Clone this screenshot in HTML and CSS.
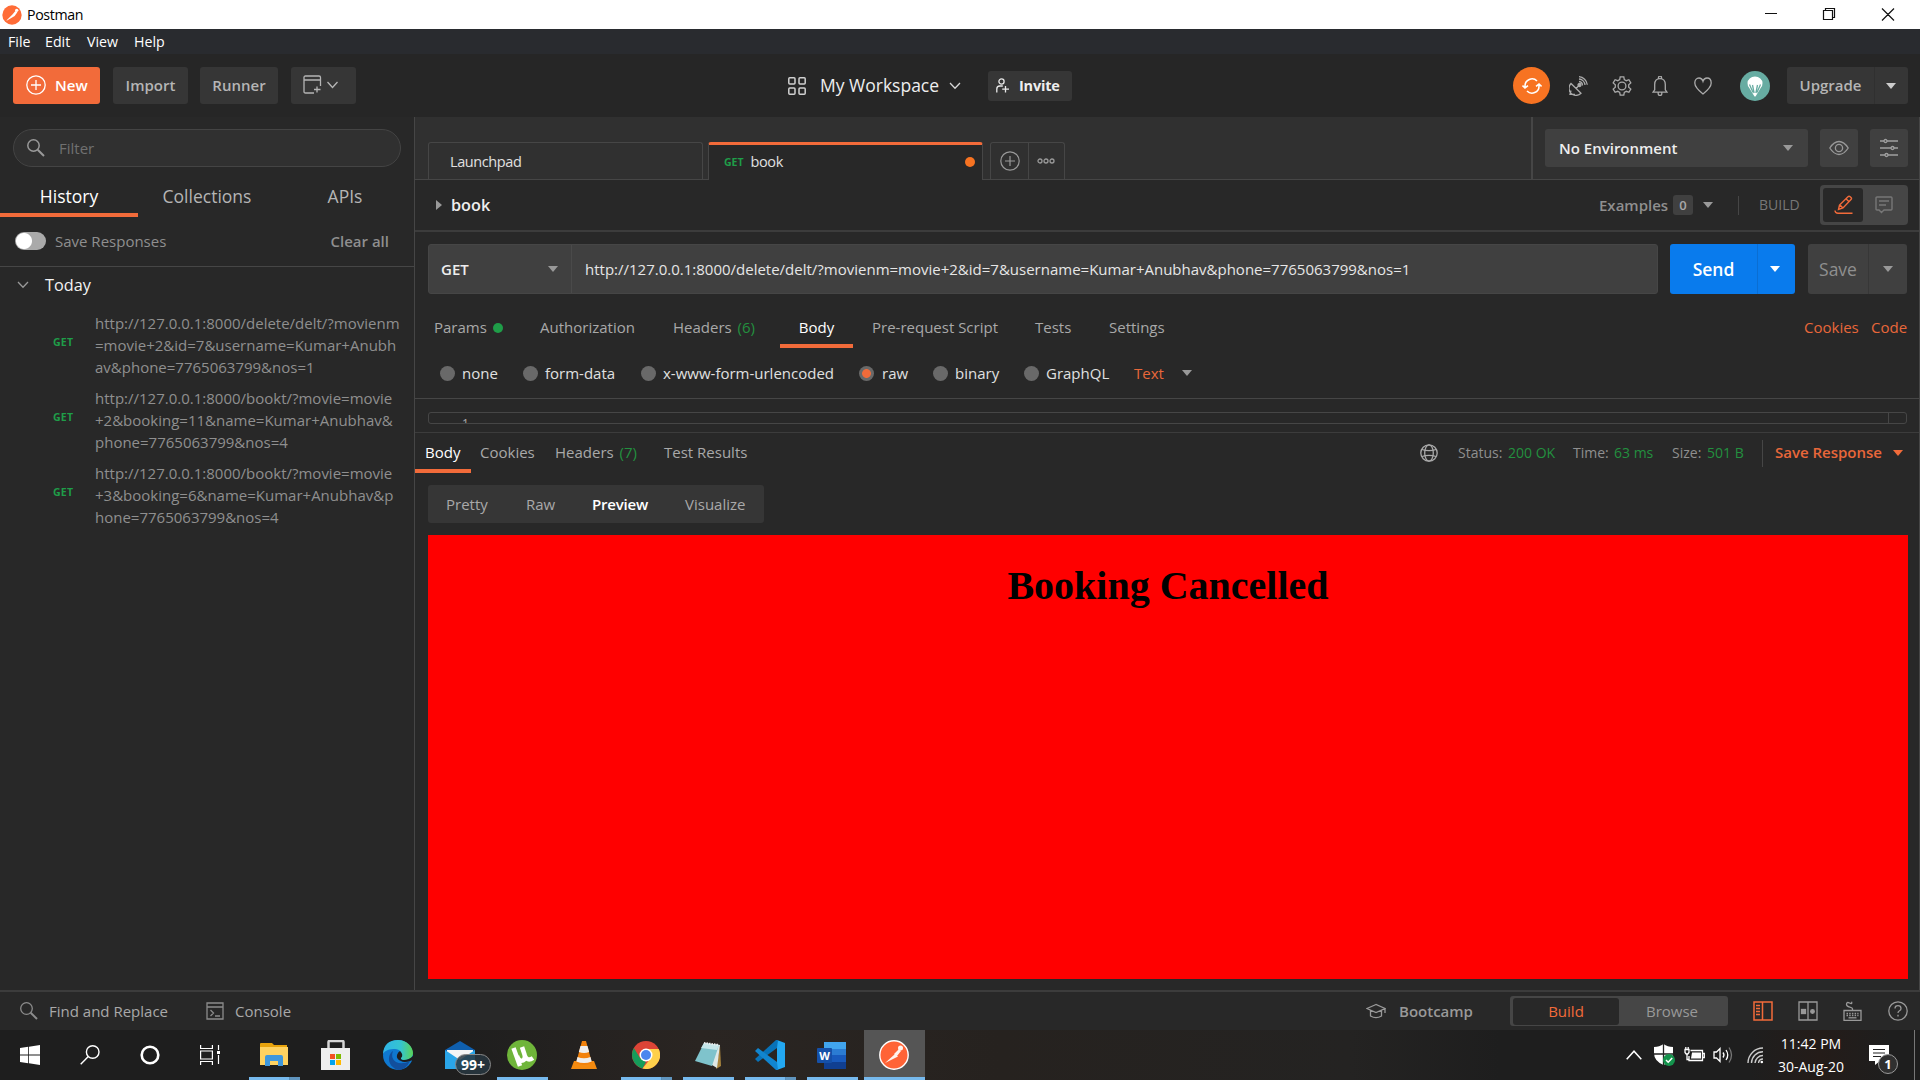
FILE: index.html
```html
<!DOCTYPE html>
<html lang="en">
<head>
<meta charset="utf-8">
<title>Postman</title>
<link rel="stylesheet" href="styles.css">
</head>
<body>
<div class="window">
  <div class="titlebar">
    <svg class="app-logo" width="20" height="20" viewBox="0 0 30 30"><circle cx="15" cy="15" r="14.5" fill="#ff6c37"/><path d="M7 23l9-9 3 2.500-12 7zM16 14l4-5 3 2-4 5.500z" fill="#fff"/><circle cx="22" cy="8" r="2.500" fill="#fff"/></svg>
    <span class="title">Postman</span>
    <svg class="win-controls" width="160" height="29" viewBox="0 0 160 29" fill="none" stroke="#111" stroke-width="1.200"><path d="M5 13.500h12M63.500 10.500h9v9h-9zM65.500 10.500v-2h9v9h-2M122 8.500l12 12M134 8.500l-12 12"/></svg>
  </div>
  <nav class="menubar"><span>File</span><span>Edit</span><span>View</span><span>Help</span></nav>

  <header class="header">
    <button class="btn btn-new"><svg width="20" height="20" viewBox="0 0 20 20" fill="none" stroke="#fff" stroke-width="1.300"><circle cx="10" cy="10" r="9.200"/><path d="M10 5v10M5 10h10"/></svg><span>New</span></button>
    <button class="btn">Import</button>
    <button class="btn">Runner</button>
    <button class="btn btn-window"><svg width="36" height="20" viewBox="0 0 36 20" fill="none" stroke="#b5b5b5" stroke-width="1.300"><path d="M11 18H2.500Q1 18 1 16.500V2.500Q1 1 2.500 1H16q1.500 0 1.500 1.500V11M1 5h16.500M14 11.500v6M11 14.500h6.500M24.500 7l5 5.500 5-5.500"/></svg></button>
    <div class="workspace">
      <svg width="18" height="18" viewBox="0 0 18 18" fill="none" stroke="#d0d0d0" stroke-width="1.500"><rect x=".8" y=".8" width="6.200" height="6.200" rx="1"/><rect x="11" y=".8" width="6.200" height="6.200" rx="1"/><rect x=".8" y="11" width="6.200" height="6.200" rx="1"/><rect x="11" y="11" width="6.200" height="6.200" rx="1"/></svg>
      <span class="ws-name">My Workspace</span>
      <svg width="12" height="8" viewBox="0 0 12 8" fill="none" stroke="#d8d8d8" stroke-width="1.300"><path d="M1 1l5 5.200L11 1"/></svg>
      <button class="invite"><svg width="14" height="16" viewBox="0 0 14 16" fill="none" stroke="#e8e8e8" stroke-width="1.300"><circle cx="5.500" cy="3.500" r="2.600"/><path d="M.8 14.500V11q0-3 3-3h3M9.500 8v6.500M6.200 11.200H13"/></svg><span>Invite</span></button>
    </div>
    <div class="header-icons">
      <span class="sync"><svg width="20" height="18" viewBox="0 0 20 18" fill="none" stroke="#fff" stroke-width="1.600"><path d="M3 10.500V9a7 7 0 0 1 12-5M17 7.500V9a7 7 0 0 1-12 5M.5 8.500L3 11l3-2.300M14 9.300L17 7l2.600 2.500"/></svg></span>
      <svg width="19" height="20" viewBox="0 0 19 20" fill="none" stroke="#aaa" stroke-width="1.300"><path d="M2 7.500a7 7 0 0 0 10 9.800zM7 12.500l3-3M2 14.500l-1 3.800h5M10 5.500a4 4 0 0 1 3.500 4M10 3a6.500 6.500 0 0 1 6 6M10 .7a9 9 0 0 1 8.300 8"/><circle cx="10.500" cy="9" r="1.500" fill="#aaa"/></svg>
      <svg width="20" height="20" viewBox="0 0 20 20" fill="none" stroke="#aaa" stroke-width="1.300"><circle cx="10" cy="10" r="3.900"/><path d="M8.200.8h3.600l.5 2.700 2 1.200 2.600-1 1.900 3.200-2.100 1.800v2.600l2.100 1.800-1.900 3.200-2.600-1-2 1.200-.5 2.700H8.200l-.5-2.700-2-1.200-2.600 1-1.900-3.200 2.100-1.800V8.700L1.200 6.900l1.900-3.200 2.600 1 2-1.200z"/></svg>
      <svg width="16" height="20" viewBox="0 0 16 20" fill="none" stroke="#aaa" stroke-width="1.300"><path d="M1 16.200h14l-1.700-2.400V8.500c0-3.500-2-5.900-5.300-5.900S2.700 5 2.700 8.500v5.300zM6.500 2.600V1.500a1.500 1.500 0 0 1 3 0v1.100M6.200 16.500v1.200a1.800 1.800 0 0 0 3.600 0v-1.200"/></svg>
      <svg width="18" height="18" viewBox="0 0 18 18" fill="none" stroke="#aaa" stroke-width="1.300"><path d="M9 17Q.8 10.500.8 6C.8 3 2.600 1 5 1q3 0 4 3.200Q10 1 13 1c2.400 0 4.200 2 4.200 5Q17.200 10.500 9 17z"/></svg>
      <svg width="30" height="30" viewBox="0 0 30 30"><circle cx="15" cy="15" r="15" fill="#67aca2"/><path d="M7.500 12a7.500 6.500 0 0 1 15 0q0 3-1.500 4.500L15.500 25.500h-1L9 16.500Q7.500 15 7.500 12z" fill="#fff"/><path d="M9.500 13.500l3.500 8M12.500 14l1.600 8M17.500 14l-1.600 8M20.500 13.500l-3.500 8" stroke="#67aca2" stroke-width="1.300"/></svg>
      <button class="split upgrade"><span>Upgrade</span><i><b class="caret"></b></i></button>
    </div>
  </header>

  <div class="workarea">
    <aside class="sidebar">
      <div class="filter"><svg width="18" height="18" viewBox="0 0 18 18" fill="none" stroke="#999" stroke-width="1.500"><circle cx="6.500" cy="6.500" r="5.700"/><path d="M10.700 10.700l6.300 6.300" stroke-width="2"/></svg><span>Filter</span></div>
      <div class="side-tabs"><span class="active">History</span><span>Collections</span><span>APIs</span></div>
      <div class="save-row"><span class="switch"></span><span class="save-label">Save Responses</span><span class="clear">Clear all</span></div>
      <div class="day"><svg width="12" height="8" viewBox="0 0 12 8" fill="none" stroke="#999" stroke-width="1.300"><path d="M1 1l5 5.200L11 1"/></svg><span>Today</span></div>
      <div class="history">
        <div class="entry"><span class="verb">GET</span><p>http://127.0.0.1:8000/delete/delt/?movienm<br>=movie+2&amp;id=7&amp;username=Kumar+Anubh<br>av&amp;phone=7765063799&amp;nos=1</p></div>
        <div class="entry"><span class="verb">GET</span><p>http://127.0.0.1:8000/bookt/?movie=movie<br>+2&amp;booking=11&amp;name=Kumar+Anubhav&amp;<br>phone=7765063799&amp;nos=4</p></div>
        <div class="entry"><span class="verb">GET</span><p>http://127.0.0.1:8000/bookt/?movie=movie<br>+3&amp;booking=6&amp;name=Kumar+Anubhav&amp;p<br>hone=7765063799&amp;nos=4</p></div>
      </div>
    </aside>

    <main class="main">
      <div class="tabstrip">
        <div class="tabs">
          <div class="tab">Launchpad</div>
          <div class="tab current"><span class="verb">GET</span><span>book</span><i class="unsaved"></i></div>
          <div class="tab-actions"><span><svg width="20" height="20" viewBox="0 0 20 20" fill="none" stroke="#999" stroke-width="1.200"><circle cx="10" cy="10" r="9.200"/><path d="M10 5v10M5 10h10"/></svg></span><span><svg width="18" height="6" viewBox="0 0 18 6" fill="none" stroke="#999" stroke-width="1.300"><circle cx="3" cy="3" r="2"/><circle cx="9" cy="3" r="2"/><circle cx="15" cy="3" r="2"/></svg></span></div>
        </div>
        <div class="env">
          <div class="env-select"><span>No Environment</span><b class="caret"></b></div>
          <span class="icon-btn"><svg width="20" height="16" viewBox="0 0 20 16" fill="none" stroke="#999" stroke-width="1.300"><path d="M.8 8Q5 1.500 10 1.500T19.200 8Q15 14.500 10 14.500T.8 8z"/><circle cx="10" cy="8" r="3.600"/></svg></span>
          <span class="icon-btn"><svg width="18" height="20" viewBox="0 0 18 20" fill="#404040" stroke="#a0a0a0" stroke-width="1.300"><path d="M0 3h18M0 10h18M0 17h18"/><circle cx="5.500" cy="3" r="1.500"/><circle cx="12.500" cy="10" r="1.500"/><circle cx="6.500" cy="17" r="1.500"/></svg></span>
        </div>
      </div>

      <div class="namebar">
        <b class="caret-right"></b><span class="req-name">book</span>
        <span class="examples">Examples</span><span class="count">0</span><b class="caret"></b><i class="rule"></i><span class="build-label">BUILD</span>
        <div class="mode"><span class="on"><svg width="19" height="20" viewBox="0 0 19 20" fill="none" stroke="#f26b3a" stroke-width="1.400"><path d="M4.500 14.500l1-4.500L14 1.700q1-1 2.200 0l.8.800q1 1 0 2L9 13zM12 3.700L15 6.700M6 10l3 3"/><path d="M1 15.500q.2 2.800 3 2.800h14.500" /></svg></span><span><svg width="18" height="18" viewBox="0 0 18 18" fill="none" stroke="#777" stroke-width="1.400"><path d="M2 1h14q1 0 1 1v11q0 1-1 1H9l-2.500 2.500L4 14H2q-1 0-1-1V2q0-1 1-1zM4 5h10M4 9h7"/></svg></span></div>
      </div>

      <div class="urlbar">
        <div class="url-field"><div class="method"><span>GET</span><b class="caret"></b></div><div class="url">http://127.0.0.1:8000/delete/delt/?movienm=movie+2&amp;id=7&amp;username=Kumar+Anubhav&amp;phone=7765063799&amp;nos=1</div></div>
        <button class="split send"><span>Send</span><i><b class="caret"></b></i></button>
        <button class="split save"><span>Save</span><i><b class="caret"></b></i></button>
      </div>

      <div class="req-tabs">
        <span>Params</span><i class="green-dot"></i><span>Authorization</span><span>Headers <em>(6)</em></span><span class="active">Body</span><span>Pre-request Script</span><span>Tests</span><span>Settings</span><a>Cookies</a><a>Code</a>
      </div>

      <div class="body-types">
        <i class="radio"></i><span>none</span><i class="radio"></i><span>form-data</span><i class="radio"></i><span>x-www-form-urlencoded</span><i class="radio checked"></i><span>raw</span><i class="radio"></i><span>binary</span><i class="radio"></i><span>GraphQL</span><a>Text</a><b class="caret"></b>
      </div>
      <div class="editor-wrap"><div class="editor"><span class="line-no">1</span></div></div>

      <div class="res-bar">
        <span class="active">Body</span><span>Cookies</span><span>Headers <em>(7)</em></span><span>Test Results</span>
        <svg width="18" height="18" viewBox="0 0 18 18" fill="none" stroke="#aaa" stroke-width="1.300"><circle cx="9" cy="9" r="8.200"/><ellipse cx="9" cy="9" rx="4.300" ry="8.200"/><path d="M1.800 5.500q7.200 2.400 14.400 0M1.800 12.500q7.200-2.400 14.400 0"/></svg>
        <span class="stat">Status:</span><em>200 OK</em><span class="stat">Time:</span><em>63 ms</em><span class="stat">Size:</span><em>501 B</em><i class="rule"></i><a>Save Response</a><b class="caret"></b>
      </div>
      <div class="views"><span>Pretty</span><span>Raw</span><span class="active">Preview</span><span>Visualize</span></div>
      <div class="preview"><h1>Booking Cancelled</h1></div>
    </main>
  </div>

  <footer class="statusbar">
    <svg width="18" height="18" viewBox="0 0 18 18" fill="none" stroke="#8c8c8c" stroke-width="1.300"><circle cx="6.500" cy="6.500" r="5.800"/><path d="M10.700 10.700l6.300 6.300" stroke-width="2"/></svg>
    <span>Find and Replace</span>
    <svg width="18" height="18" viewBox="0 0 18 18" fill="none" stroke="#8c8c8c" stroke-width="1.300"><path d="M1 1h16v16H1zM1 5h16M4.500 8l3 3-3 3M9 14h5"/></svg>
    <span>Console</span>
    <svg width="20" height="16" viewBox="0 0 20 16" fill="none" stroke="#999" stroke-width="1.300"><path d="M10 1.500L1 5.500l9 4 9-4zM4.500 7.500V13q5.500 3.300 11 0V7.500M19 5.500V10"/></svg>
    <span class="bootcamp">Bootcamp</span>
    <div class="bb"><span class="on">Build</span><span>Browse</span></div>
    <svg width="20" height="20" viewBox="0 0 20 20" fill="none" stroke="#f26b3a" stroke-width="1.500"><path d="M1 1h18v18H1zM9.500 1v18M3 4.500h4M3 7.500h4M3 10.500h4M3 13.500h4"/></svg>
    <svg width="20" height="20" viewBox="0 0 20 20" fill="none" stroke="#999" stroke-width="1.300"><path d="M1 1h18v18H1zM10 1v18"/><rect x="3.500" y="8.500" width="4" height="4" fill="#999"/><circle cx="14.500" cy="10.500" r="1.800" fill="#999"/></svg>
    <svg width="19" height="20" viewBox="0 0 19 20" fill="none" stroke="#999" stroke-width="1.300"><path d="M1 9.500h17v9.800H1zM9.500 9.500V7.800c0-2.500-6-1-6-4.300q0-3 3-1.500T8.500.8"/><path d="M3.500 12.500h12M3.500 14.500h12" stroke-dasharray="1.500 1.200"/><path d="M5.500 16.800h8"/></svg>
    <svg width="20" height="20" viewBox="0 0 20 20" fill="none" stroke="#999" stroke-width="1.300"><circle cx="10" cy="10" r="9.200"/><path d="M7 7.500Q7 4.700 10 4.700t3 2.800q0 1.500-1.500 2.300T10 12M10 13.800v1.700"/></svg>
  </footer>

  <div class="taskbar">
    <span class="sys"><svg width="20" height="20" viewBox="0 0 20 20" fill="#fff"><path d="M0 3l8.200-1.200V9.500H0zM9 1.700L20 0v9.500H9zM0 10.500h8.200v7.700L0 17zM9 10.500h11V20L9 18.300z"/></svg></span>
    <span class="sys"><svg width="20" height="20" viewBox="0 0 20 20" fill="none" stroke="#fff" stroke-width="1.400"><circle cx="12.700" cy="7" r="6.300"/><path d="M8.300 11.500L.7 19.300"/></svg></span>
    <span class="sys"><svg width="20" height="20" viewBox="0 0 20 20" fill="none" stroke="#fff" stroke-width="2.600"><circle cx="10" cy="10" r="8.300"/></svg></span>
    <span class="sys"><svg width="20" height="20" viewBox="0 0 20 20" fill="none" stroke="#fff" stroke-width="1.200"><path d="M.6 0v3.500h11.800V0M.6 20v-3.500h11.800V20M.6 6h11.800v8H.6zM18.500 0v5M18.500 10v9"/><path d="M17 6h3v3h-3z" fill="#fff" stroke="none"/></svg></span>
    <span class="app first multi"><svg width="28" height="24" viewBox="0 0 28 24"><path d="M0 1q0-1 1-1h11l2 2h13v6H0z" fill="#e8a30c"/><path d="M0 4h28v18H0z" fill="#ffd260"/><path d="M5 23V14q0-2 2-2h14q2 0 2 2v9h-5v-5h-8v5z" fill="#3f97dc"/></svg></span>
    <span class="app plain"><svg width="30" height="30" viewBox="0 0 30 30"><path d="M7.500 9V2q0-1 1-1h13q1 0 1 1v7" fill="none" stroke="#d5d5d5" stroke-width="2.500"/><path d="M0 8h29v22H0z" fill="#eee"/><path d="M9 14h5v5H9z" fill="#f25022"/><path d="M15 14h5v5h-5z" fill="#7fba00"/><path d="M9 20h5v5H9z" fill="#00a4ef"/><path d="M15 20h5v5h-5z" fill="#ffb900"/></svg></span>
    <span class="app plain"><svg width="30" height="30" viewBox="0 0 30 30"><defs><linearGradient id="eg"><stop stop-color="#2fb4e8"/><stop offset=".6" stop-color="#35c5cf"/><stop offset="1" stop-color="#5bd455"/></linearGradient></defs><circle cx="15" cy="15" r="15" fill="#0f78d0"/><path d="M0 14Q1 0 15 0c9 0 15 7 15 13 0 5-5 7-9 7-3 0-4-1-3-3 2-4-1-8-6-8S2 10 0 14z" fill="url(#eg)"/><path d="M10 11q-3 7 3 11 6 3 14-1-4 9-12 9C4 26 4 15 10 11z" fill="#124f9d"/><path d="M17 11q4 4 1 7-.5 2 3 2 5 0 9-4v4l-3 1q-6 2-9 0-5-2-4-6 1-3 3-4z" fill="#1e1e1e"/></svg></span>
    <span class="app plain mail"><svg width="30" height="28" viewBox="0 0 30 28"><path d="M0 9L15 0l15 9v19H0z" fill="#0f5fae"/><path d="M2 9h26v10H2z" fill="#f5f5f5"/><path d="M0 9l15 10L30 9v19H0z" fill="#2aa5e8"/></svg><b>99+</b></span>
    <span class="app"><svg width="30" height="30" viewBox="0 0 30 30"><circle cx="15" cy="15" r="15" fill="#6fb53a"/><path d="M6.500 8l6.500 18" stroke="#fff" stroke-width="4.500"/><path d="M10 16q2 6 6 4.500 3-1.500 1.500-6L15 7M17.500 15q2.500 7 8.500 3" fill="none" stroke="#fff" stroke-width="4.500"/></svg></span>
    <span class="app plain"><svg width="26" height="30" viewBox="0 0 26 30"><path d="M3 21h20l3 8H0z" fill="#f48b10"/><path d="M11 1h4l6 22q-8 4-16 0z" fill="#f2820c"/><path d="M9.500 6h7l1.700 6q-5.200 2-10.400 0zM6.500 17q6.500 2.500 13 0l1.200 4.500q-7.700 3-15.400 0z" fill="#eee"/></svg></span>
    <span class="app multi"><svg width="28" height="28" viewBox="0 0 28 28"><circle cx="14" cy="14" r="14" fill="#dc4436"/><path d="M1.900 7L8 17l6 4-3.500 6.500A14 14 0 0 1 1.900 7z" fill="#159c5a"/><path d="M14 8h12.700A14 14 0 0 1 10.500 27.500L19 17z" fill="#ffd04a"/><circle cx="14" cy="14" r="6.500" fill="#fff"/><circle cx="14" cy="14" r="5" fill="#4a86ee"/></svg></span>
    <span class="app"><svg width="28" height="28" viewBox="0 0 28 28"><path d="M26 5l1 20-5 3z" fill="#a8843d"/><path d="M10 2l16 2-3 23-5-3z" fill="#dfe8e6"/><path d="M10 2l15 2-7 21-17-5z" fill="#7fc3cc"/><path d="M10 2l15 2-2 5L7 7z" fill="#c5e6ea"/><path d="M10 2l15 2" stroke="#eee" stroke-width="2" stroke-dasharray="1.500 1"/></svg></span>
    <span class="app multi"><svg width="30" height="30" viewBox="0 0 30 30"><path d="M22 0l8 3v24l-8 3z" fill="#23a8f2"/><path d="M22 8L3 22l-3-3L21 0h2z" fill="#0872b8"/><path d="M22 22L3 8l-3 3 21 19h2z" fill="#1185cf"/></svg></span>
    <span class="app"><svg width="30" height="28" viewBox="0 0 30 28"><path d="M7 1h22v7H7z" fill="#41a5ee"/><path d="M7 8h22v6H7z" fill="#2b7cd3"/><path d="M7 14h22v7H7z" fill="#185abd"/><path d="M7 21h22v7H7z" fill="#103f91"/><rect y="7" width="15" height="15" rx="1" fill="#1550a8"/><text x="7.500" y="18.500" text-anchor="middle" class="word-mark">W</text></svg></span>
    <span class="app focus"><svg width="30" height="30" viewBox="0 0 30 30"><circle cx="15" cy="15" r="14.200" fill="#ff6336" stroke="#fff" stroke-width="1.400"/><path d="M6 23l10-9 3 2.500zM15 14l5-5 2 2-4 5z" fill="#fff3ee"/><circle cx="21.500" cy="8" r="2.500" fill="#fff3ee"/></svg></span>
    <div class="tray">
      <svg width="16" height="10" viewBox="0 0 16 10" fill="none" stroke="#fff" stroke-width="1.500"><path d="M.7 9.200L8 1.200l7.300 8"/></svg>
      <svg width="21" height="22" viewBox="0 0 21 22"><path d="M9.500 0q4 3 9.500 3v6q0 8-9.500 12Q0 17 0 9V3q5.500 0 9.500-3z" fill="#fff"/><path d="M9.500 0v21M0 10h19" stroke="#222" stroke-width="1.300"/><circle cx="15" cy="16" r="6" fill="#14934c"/><path d="M12 16l2.200 2.200 4-4.200" fill="none" stroke="#fff" stroke-width="1.500"/></svg>
      <svg width="21" height="16" viewBox="0 0 21 16" fill="none" stroke="#fff" stroke-width="1.300"><path d="M6.500 3.500h12v10H5V9M19 6.500h1.300v4H19M1 2.500h4v3L3.800 7h-1.600L1 5.500zM1.800 0v2.500M4.200 0v2.500M3 7v5.500h2"/><path d="M8 5.500h9v6H7z" fill="#fff" stroke="none"/></svg>
      <svg width="20" height="18" viewBox="0 0 20 18" fill="none" stroke="#fff" stroke-width="1.300"><path d="M1 6h2.500L7 2.500v13L3.500 12H1zM10 6.500q2 2.500 0 5M13 4q3.500 5 0 10"/><path d="M16 1.500q5 7.500 0 15" stroke="#777"/></svg>
      <svg width="17" height="17" viewBox="0 0 17 17" fill="none" stroke="#ccc" stroke-width="1.400"><path d="M1 16A15 15 0 0 1 16 1M4.500 16A11.500 11.500 0 0 1 16 4.800M8 16a8 8 0 0 1 8-7.500M11.500 16a4.500 4.500 0 0 1 4.500-4"/><circle cx="14.800" cy="15" r="1.300" fill="#fff" stroke="none"/></svg>
      <div class="clock"><span>11:42 PM</span><span>30-Aug-20</span></div>
      <div class="notice"><svg width="20" height="20" viewBox="0 0 20 20"><path d="M0 0h20v16h-9l-5 4v-4H0z" fill="#fff"/><path d="M4 4.500h12M4 8h12M4 11.500h8" stroke="#222" stroke-width="1.200"/></svg><b>1</b></div>
    </div>
  </div>
</div>
</body>
</html>
```
FILE: styles.css
```css
* { box-sizing: border-box; }
body { margin: 0; background: #282828; font-family: "Open Sans", "Noto Sans", sans-serif; font-size: 15px; line-height: 20px; color: #a9a9a9; overflow: hidden; }
span, a, em { white-space: nowrap; }
em, i { font-style: normal; }
svg { display: block; flex: none; }
button { font: inherit; border: 0; padding: 0; color: inherit; }
.window { width: 1920px; height: 1080px; display: flex; flex-direction: column; }

.caret { width: 0; height: 0; border: 5px solid transparent; border-top: 6px solid #999; border-bottom: 0; flex: none; }
.caret-right { width: 0; height: 0; border: 5px solid transparent; border-left: 6px solid #999; border-right: 0; margin-left: 1px; }
.verb { color: #1f9d48; font-weight: 700; font-size: 10.5px; }

/* window chrome */
.titlebar { height: 29px; background: #fff; display: flex; align-items: center; padding-left: 2px; color: #000; }
.title { margin-left: 5px; font-size: 14.2px; letter-spacing: -.35px; }
.win-controls { margin-left: auto; }
.menubar { height: 25px; background: #292b2f; color: #fff; display: grid; grid-template-columns: 37px 42px 47px 60px; padding-left: 8px; align-items: center; font-size: 14.2px; }

/* header */
.header { height: 63px; background: #262626; display: grid; grid-template-columns: 87px 75px 78px 65px 300px 1fr; column-gap: 13px; padding: 0 12px 0 13px; align-items: center; }
.btn { height: 37px; background: #363636; border-radius: 3px; font-weight: 600; color: #b5b5b5; padding-bottom: 2px; }
.btn + .btn + .btn { margin-left: -1px; margin-right: 1px; }
.btn-new { background: #f26b3a; color: #fff; display: flex; align-items: center; gap: 9px; padding-left: 13px; }
.btn-window { padding-left: 12px; }
.workspace { margin-left: 418px; display: grid; grid-template-columns: 32px 129px 39px 84px; align-items: center; color: #eee; }
.ws-name { font-size: 17.5px; padding-bottom: 2px; }
.invite { height: 30px; background: #363636; border-radius: 3px; font-weight: 700; color: #eee; display: flex; align-items: center; gap: 9px; padding-left: 8px; font-size: 14.5px; letter-spacing: -.2px; }
.header-icons { justify-self: end; display: grid; grid-template-columns: 56px 43px 40px 42px 46px 47px 121px; align-items: center; }
.sync { width: 37px; height: 37px; border-radius: 50%; background: #f77322; display: grid; place-items: center; }
.split { display: flex; border-radius: 3px; overflow: hidden; font-weight: 600; }
.split span { flex: 1; align-self: center; text-align: center; }
.split i { display: grid; place-items: center; align-self: stretch; border-left: 1px solid #303030; padding-right: 2px; }
.upgrade { height: 37px; background: #363636; color: #b5b5b5; }
.upgrade span { padding-bottom: 2px; }
.upgrade i { width: 34px; }
.upgrade .caret { border-top-color: #ccc; }

/* sidebar */
.workarea { height: 873px; display: flex; }
.sidebar { width: 415px; border-right: 1px solid #464646; }
.filter { margin: 12px 13px 0; height: 38px; border: 1px solid #444; border-radius: 19px; background: #303030; display: flex; align-items: center; gap: 14px; padding-left: 13px; color: #707070; }
.side-tabs { height: 50px; display: grid; grid-template-columns: repeat(3, 138px); text-align: center; font-size: 17.5px; color: #b5b5b5; }
.side-tabs span { padding-top: 19px; }
.side-tabs .active { color: #fff; border-bottom: 4px solid #f26b3a; }
.save-row { height: 50px; border-bottom: 1px solid #464646; display: flex; align-items: center; padding: 0 25px 2px 15px; color: #8f8f8f; }
.switch { width: 31px; height: 18px; border-radius: 9px; background: radial-gradient(circle at 9px 9px, #fff 7.5px, #aaa 8.5px); }
.save-label { margin-left: 9px; }
.clear { margin-left: auto; font-weight: 600; }
.day { height: 37px; display: grid; grid-template-columns: 28px 1fr; align-items: center; padding: 0 0 2px 17px; font-size: 16.25px; font-weight: 500; color: #f2f2f2; }
.history { padding-top: 8px; }
.entry { height: 75px; display: grid; grid-template-columns: 42px 1fr; padding-left: 53px; color: #8f8f8f; }
.entry .verb { padding-top: 20px; letter-spacing: .2px; }
.entry p { margin: 0; line-height: 22px; white-space: nowrap; }

/* tab strip */
.main { width: 1505px; border-right: 1px solid #464646; }
.tabstrip { height: 63px; background: #303030; display: flex; }
.tabs { width: 1116px; display: flex; align-items: flex-end; border-bottom: 1px solid #464646; padding-left: 13px; }
.tab { width: 275px; height: 37px; border: 1px solid #464646; border-bottom: 0; border-radius: 3px 3px 0 0; padding: 9px 0 0 21px; color: #e0e0e0; font-size: 14.5px; font-weight: 500; letter-spacing: -.4px; }
.current { margin: 0 7px -1px 5px; height: 38px; background: #282828; border-top: 3px solid #f26b3a; padding: 7px 7px 0 15px; display: flex; gap: 7px; }
.current .verb { letter-spacing: 0; }
.current .unsaved { width: 10px; height: 10px; border-radius: 50%; background: #f77322; margin: 5px 0 0 auto; }
.tab-actions { width: 75px; height: 37px; border: 1px solid #464646; border-bottom: 0; border-radius: 3px 3px 0 0; display: grid; grid-template-columns: 37px 36px; }
.tab-actions span { display: grid; place-items: center; }
.tab-actions span + span { border-left: 1px solid #464646; padding-right: 2px; }
.env { flex: 1; border-left: 2px solid #464646; border-bottom: 1px solid #464646; display: grid; grid-template-columns: 263px 38px 38px; gap: 12px; padding: 12px 0 0 12px; }
.env-select, .icon-btn { height: 38px; background: #404040; border-radius: 3px; display: flex; align-items: center; }
.env-select { justify-content: space-between; padding: 0 15px 0 14px; font-weight: 600; color: #eee; }
.icon-btn { justify-content: center; }

/* request */
.namebar { height: 52px; border-bottom: 2px solid #3c3c3c; display: grid; grid-template-columns: 16px 1148px 74px 30px 35px 21px 61px 88px; align-items: center; padding-left: 20px; font-weight: 600; }
.req-name { font-size: 16.25px; color: #eee; }
.examples { color: #8f8f8f; }
.count { width: 20px; height: 20px; border-radius: 3px; background: #404040; text-align: center; font-size: 13px; }
.rule { width: 1px; height: 19px; background: #464646; }
.build-label { font-weight: 400; font-size: 14px; color: #777; }
.mode { height: 40px; background: #464646; border-radius: 4px; padding: 3px; display: grid; grid-template-columns: 40px 42px; }
.mode span { display: grid; place-items: center; }
.on { background: #282828; border-radius: 3px; }
.urlbar { height: 62px; padding: 12px 0 0 13px; display: grid; grid-template-columns: 1230px 125px 100px; column-gap: 12px; }
.url-field { height: 50px; border: 1px solid #464646; border-radius: 3px; background: #404040; display: flex; align-items: center; }
.method { width: 143px; height: 48px; border-right: 1px solid #4a4a4a; display: flex; align-items: center; justify-content: space-between; padding: 0 13px 0 12px; color: #eee; font-weight: 600; }
.url { padding-left: 13px; color: #e6e6e6; white-space: nowrap; }
.send { height: 50px; background: #097bed; color: #fff; font-size: 17.5px; }
.send i { width: 38px; border-color: #0a6ed3; padding-right: 3px; }
.send .caret { border-top-color: #fff; }
.save { height: 50px; background: #404040; color: #8f8f8f; margin-left: 1px; font-size: 17.5px; font-weight: 500; }
.save i { width: 39px; border-color: #373737; padding-right: 1px; }

.req-tabs { height: 54px; padding-left: 19px; display: grid; grid-template-columns: 59px 47px 133px 107px 92px 163px 74px 695px 67px 60px; color: #a9a9a9; }
.req-tabs > * { margin-top: 23px; }
.req-tabs .green-dot { width: 10px; height: 10px; border-radius: 50%; background: #1f9d48; margin-top: 29px; }
em { color: #23903f; padding-left: 2px; }
a { color: #e8673a; }
.req-tabs .active { color: #fff; font-weight: 500; width: 73px; height: 31px; text-align: center; border-bottom: 4px solid #f26b3a; }
.body-types { height: 51px; border-bottom: 1px solid #464646; padding-left: 25px; display: grid; grid-template-columns: 22px 61px 22px 96px 22px 196px 23px 51px 22px 69px 22px 88px 48px 12px; align-items: center; color: #e0e0e0; font-weight: 500; }
.body-types a { font-weight: 400; }
.radio { width: 15px; height: 15px; border-radius: 50%; background: #696969; }
.checked { background: radial-gradient(circle, #f26b3a 4px, #696969 4.800px); }
.editor-wrap { height: 34px; padding: 13px 12px 0 13px; border-bottom: 1px solid #3c3c3c; }
.editor { height: 12px; border: 1px solid #464646; border-radius: 3px; overflow: hidden; padding: 5px 18px 0 33px; font-size: 12px; line-height: 12px; background: linear-gradient(#464646, #464646) calc(100% - 17px) 0 / 1px 100% no-repeat; }
.line-no { display: block; }

/* response */
.res-bar { height: 40px; padding-left: 10px; display: grid; grid-template-columns: 55px 75px 109px 756px 38px 50px 65px 41px 58px 35px 55px 13px 118px 12px; align-items: center; }
.res-bar > span { padding-bottom: 2px; }
.res-bar .active { color: #fff; font-weight: 500; align-self: end; width: 56px; margin-left: -10px; padding-left: 10px; height: 31px; border-bottom: 4px solid #f26b3a; line-height: 21px; }
.res-bar .stat, .res-bar > em { font-size: 14px; padding: 0; }
.stat { color: #8f8f8f; }
.res-bar .rule { height: 27px; }
.res-bar a { font-weight: 600; padding-bottom: 2px; }
.res-bar .caret { border-top-color: #f26b3a; }
.views { width: 336px; height: 38px; margin: 12px 0 12px 13px; background: #363636; border-radius: 3px; padding: 0 0 1px 18px; display: grid; grid-template-columns: 80px 66px 93px 70px; align-items: center; }
.views .active { color: #fff; font-weight: 600; letter-spacing: -.2px; }
.preview { width: 1480px; height: 444px; margin-left: 13px; background: #f00; }
h1 { margin: 0; padding-top: 28px; text-align: center; color: #000; font: 700 40px/46px "Liberation Serif", serif; }

/* status bar */
.statusbar { height: 40px; border-top: 2px solid #3c3c3c; display: grid; grid-template-columns: 29px 157px 29px 1131px 33px 111px 243px 45px 45px 45px 20px; padding-left: 20px; align-items: center; }
.bootcamp { font-weight: 600; color: #999; }
.bb { width: 218px; height: 30px; background: #464646; border-radius: 3px; padding: 2px 3px; display: grid; grid-template-columns: 106px 106px; text-align: center; line-height: 27px; color: #999; }
.bb .on { color: #f26b3a; line-height: 26px; }

/* taskbar */
.taskbar { height: 50px; background: linear-gradient(90deg, #1e1e1e 0, #1e1e1e 450px, #2a2522 700px, #26221f 1000px, #242322 1350px, #1e1e1e 1500px, #1e1e1e 1750px, #241c19 1820px, #1e1e1e 1890px); display: flex; }
.sys { width: 60px; display: grid; place-items: center; }
.app { width: 62px; display: grid; place-items: center; background: linear-gradient(#76b9ed, #76b9ed) 6px 100% / 51px 3px no-repeat; }
.first { margin-left: 3px; }
.multi { background: linear-gradient(90deg, #76b9ed 40px, #4d86b3 40px, #6095be 41px) 6px 100% / 51px 3px no-repeat; }
.plain { background: none; }
.focus { background: linear-gradient(#76b9ed, #76b9ed) 0 100% / 100% 3px no-repeat #555; margin-left: 1px; width: 61px; padding-right: 1px; }
.mail { position: relative; }
.mail b { position: absolute; left: 26px; top: 24px; width: 36px; height: 21px; border: 1px solid #888; border-radius: 11px; background: rgba(40, 55, 65, .85); color: #fff; font-size: 14px; line-height: 19px; text-align: center; }
.word-mark { font: 700 11px "Open Sans", sans-serif; fill: #fff; }
.tray { margin-left: 701px; display: grid; grid-template-columns: 28px 30px 29px 34px 20px 88px 14px 46px; align-items: center; color: #fff; flex: 1; }
.clock { display: grid; text-align: center; font-size: 14px; line-height: 23px; margin-top: -1px; }
.notice { grid-column: 8; position: relative; height: 50px; padding-top: 15px; border-right: 1px solid #777; }
.notice b { position: absolute; left: 9px; top: 24px; width: 20px; height: 20px; border: 1px solid #999; border-radius: 50%; background: #303030; font-size: 13px; line-height: 18px; text-align: center; }
```
